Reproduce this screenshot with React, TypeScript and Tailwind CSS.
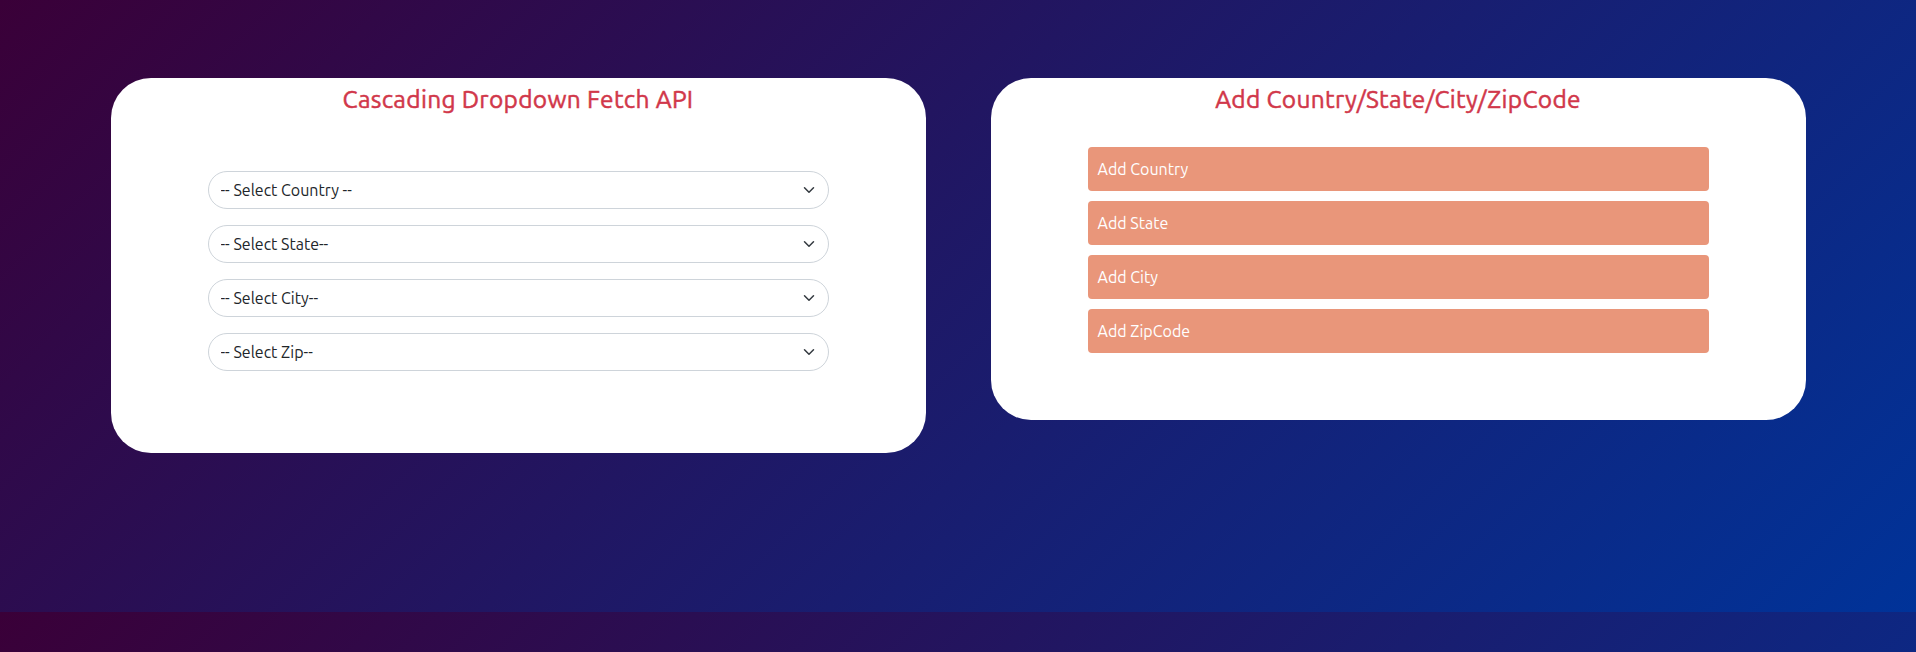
import React from "react";

const font = { fontFamily: "Ubuntu, Lato, 'Noto Sans', sans-serif" };

function Chevron() {
  return (
    <svg
      className="pointer-events-none absolute right-[12px] top-1/2 -translate-y-1/2"
      width="16"
      height="12"
      viewBox="0 0 16 16"
      fill="none"
      stroke="#343a40"
      strokeWidth="2"
      strokeLinecap="round"
      strokeLinejoin="round"
    >
      <path d="m2 5 6 6 6-6" />
    </svg>
  );
}

function Select({ label }: { label: string }) {
  return (
    <div className="relative mx-auto w-[621px]">
      <select
        className="block h-[38px] w-full appearance-none rounded-full border border-[#ced4da] bg-white pl-3 pr-9 text-base text-[#212529] outline-none"
        style={font}
        defaultValue=""
      >
        <option value="">{label}</option>
      </select>
      <Chevron />
    </div>
  );
}

function AddButton({ label }: { label: string }) {
  return (
    <button
      className="mx-auto flex h-[44px] w-[621px] items-center rounded-[4px] bg-[#e9967a] px-[10px] text-left text-base text-white"
      style={font}
    >
      {label}
    </button>
  );
}

function Title({ children }: { children: React.ReactNode }) {
  return (
    <h2 className="text-center text-[24.5px] leading-[29px] font-normal tracking-[0.3px] text-[#d1374a] [-webkit-text-stroke:0.5px_#d1374a]">
      {children}
    </h2>
  );
}

export default function App() {
  return (
    <div style={font}>
      <div className="h-[612px] bg-[linear-gradient(135deg,#3a0038,#003399)] pt-[78px]">
        <div className="flex items-start justify-center gap-[65px]">
          <div className="w-[815px] rounded-[40px] bg-white pt-[7px] pb-[82px]">
            <Title>Cascading Dropdown Fetch API</Title>
            <div className="mt-[57px] flex flex-col gap-4">
              <Select label="-- Select Country --" />
              <Select label="-- Select State--" />
              <Select label="-- Select City--" />
              <Select label="-- Select Zip--" />
            </div>
          </div>
          <div className="w-[815px] rounded-[40px] bg-white pt-[7px] pb-[67px]">
            <Title>Add Country/State/City/ZipCode</Title>
            <div className="mt-[33px] flex flex-col gap-[10px]">
              <AddButton label="Add Country" />
              <AddButton label="Add State" />
              <AddButton label="Add City" />
              <AddButton label="Add ZipCode" />
            </div>
          </div>
        </div>
      </div>
      <div className="h-[40px] bg-[linear-gradient(135deg,#3a0038,#003399)] bg-[length:100%_612px] bg-top bg-no-repeat" />
    </div>
  );
}
